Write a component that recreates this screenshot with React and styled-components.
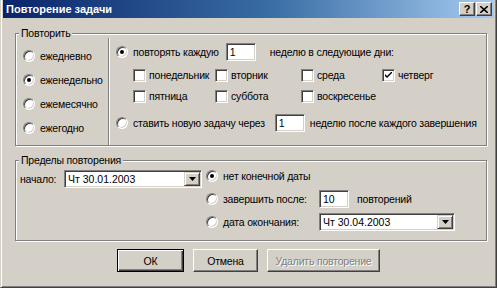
import React from 'react';
import styled, { createGlobalStyle } from 'styled-components';

const Global = createGlobalStyle`
  html, body { margin: 0; padding: 0; background: #d4d0c8; }
  body {
    font-family: "Liberation Sans", Arial, sans-serif;
    font-size: 10.5px;
    letter-spacing: -0.2px;
    color: #000;
  }
  * { box-sizing: border-box; }
`;

const Window = styled.div`
  width: 497px;
  height: 288px;
  background: #d4d0c8;
  border-style: solid;
  border-width: 0 1px 1px 1px;
  border-color: #d4d0c8 #404040 #404040 #d4d0c8;
  box-shadow: inset 1px 0 #fff, inset -1px -1px #808080;
  padding: 0 2px 2px 2px;
  display: flex;
  flex-direction: column;
`;

const TitleBar = styled.div`
  height: 18px;
  display: flex;
  align-items: center;
  padding: 0 2px 0 3px;
  background: linear-gradient(to right, #0a246a, #3a6ea5 55%, #a6caf0);
`;

const TitleText = styled.div`
  flex: 1;
  color: #fff;
  font-weight: bold;
  font-size: 11px;
  letter-spacing: 0;
`;

const CaptionButton = styled.div`
  width: 16px;
  height: 14px;
  margin-left: ${p => p.$gap || 0}px;
  background: #d4d0c8;
  border: 1px solid;
  border-color: #fff #404040 #404040 #fff;
  box-shadow: inset -1px -1px #808080;
  display: flex;
  align-items: center;
  justify-content: center;
  font-weight: bold;
  font-size: 11px;
  line-height: 1;
`;

const Content = styled.div`
  flex: 1;
  display: flex;
  flex-direction: column;
  padding: 15px 0 0 12px;
`;

const Group = styled.div`
  position: relative;
  width: 472px;
  height: ${p => p.$h}px;
  margin-top: ${p => p.$mt || 0}px;
  border: 1px solid #808080;
  box-shadow: inset 1px 1px #fff, 1px 1px #fff;
  display: flex;
`;

const GroupLabel = styled.div`
  position: absolute;
  top: -7px;
  left: 3px;
  padding: 0 2px;
  background: #d4d0c8;
  line-height: 13px;
`;

const FreqColumn = styled.div`
  width: 92px;
  padding: 14px 0 0 7px;
  display: flex;
  flex-direction: column;
  gap: 8px;
`;

const OptionRow = styled.label`
  display: flex;
  align-items: center;
  height: ${p => p.$h || 16}px;
  margin-top: ${p => p.$mt || 0}px;
  white-space: nowrap;
`;

const RadioCircle = styled.span`
  width: 12px;
  height: 12px;
  flex: none;
  border-radius: 50%;
  background: #fff;
  border: 1px solid;
  border-color: #808080 #fff #fff #808080;
  box-shadow: inset 1px 1px #404040, inset -1px -1px #d4d0c8;
  display: flex;
  align-items: center;
  justify-content: center;
  margin-right: ${p => p.$mr || 5}px;
  &::after {
    content: '';
    width: 4px;
    height: 4px;
    border-radius: 50%;
    background: ${p => (p.$on ? '#000' : 'transparent')};
  }
`;

const CheckBox = styled.span`
  width: 13px;
  height: 13px;
  flex: none;
  background: #fff;
  border: 1px solid;
  border-color: #808080 #fff #fff #808080;
  box-shadow: inset 1px 1px #404040, inset -1px -1px #d4d0c8;
  display: flex;
  align-items: center;
  justify-content: center;
  margin-right: 3px;
`;

const PatternColumn = styled.div`
  flex: 1;
  margin-top: 4px;
  border-left: 1px solid #808080;
  box-shadow: inset 1px 0 #fff;
  padding: 4px 0 0 7px;
  display: flex;
  flex-direction: column;
`;

const CheckGrid = styled.div`
  display: grid;
  grid-template-columns: 82px 86px 81px auto;
  row-gap: 5px;
  padding-left: 17px;
  margin-top: ${p => p.$mt || 0}px;
`;

const TextField = styled.div`
  width: ${p => p.$w}px;
  height: ${p => p.$h || 18}px;
  flex: none;
  background: #fff;
  border: 1px solid;
  border-color: #808080 #fff #fff #808080;
  box-shadow: inset 1px 1px #404040, inset -1px -1px #d4d0c8;
  padding: 0 3px;
  display: flex;
  align-items: center;
  letter-spacing: 0;
  margin: 0 ${p => p.$mr || 0}px 0 ${p => p.$ml || 0}px;
`;

const Combo = styled(TextField)`
  padding: 0 1px 0 3px;
  justify-content: space-between;
`;

const DropButton = styled.span`
  width: 16px;
  height: 14px;
  background: #d4d0c8;
  border: 1px solid;
  border-color: #d4d0c8 #404040 #404040 #d4d0c8;
  box-shadow: inset 1px 1px #fff, inset -1px -1px #808080;
  display: flex;
  align-items: center;
  justify-content: center;
`;

const LimitLeft = styled.div`
  display: flex;
  align-items: center;
  align-self: flex-start;
  padding: 9px 0 0 4px;
  width: 190px;
`;

const StartLabel = styled.span`
  width: 44px;
`;

const LimitRight = styled.div`
  display: grid;
  grid-template-columns: 113px auto auto;
  grid-auto-rows: 18px;
  row-gap: 5px;
  padding-top: 6px;
  align-items: center;
`;

const Wide = styled.div`
  grid-column: 1 / -1;
  display: flex;
  align-items: center;
`;

const Cell = styled.div`
  display: flex;
  align-items: center;
  white-space: nowrap;
`;

const ButtonRow = styled.div`
  display: flex;
  justify-content: center;
  gap: 9px;
  margin-top: 8px;
  padding-right: 12px;
`;

const Button = styled.div`
  width: ${p => p.$w}px;
  height: 23px;
  background: #d4d0c8;
  display: flex;
  align-items: center;
  justify-content: center;
  border: 1px solid;
  border-color: ${p => (p.$default ? '#000' : '#fff #404040 #404040 #fff')};
  box-shadow: ${p =>
    p.$default
      ? 'inset 1px 1px #fff, inset -1px -1px #404040, inset -2px -2px #808080'
      : 'inset -1px -1px #808080'};
  color: ${p => (p.$disabled ? '#808080' : '#000')};
  text-shadow: ${p => (p.$disabled ? '1px 1px #fff' : 'none')};
`;

const Check = () => (
  <svg width="7" height="7" viewBox="0 0 7 7">
    <path d="M0 2 L0 4 L2 6 L7 1 L7 -1 L2 4 Z" fill="#000" />
  </svg>
);

const Arrow = () => (
  <svg width="7" height="4" viewBox="0 0 7 4">
    <path d="M0 0 H7 L3.5 4 Z" fill="#000" />
  </svg>
);

const CloseGlyph = () => (
  <svg width="8" height="7" viewBox="0 0 8 7">
    <path d="M0 0 L8 7 M8 0 L0 7" stroke="#000" strokeWidth="1.6" />
  </svg>
);

const Radio = ({ on, children, mt, h }) => (
  <OptionRow $mt={mt} $h={h}>
    <RadioCircle $on={on} />
    {children}
  </OptionRow>
);

const Day = ({ on, children }) => (
  <OptionRow>
    <CheckBox>{on && <Check />}</CheckBox>
    {children}
  </OptionRow>
);

export default function App() {
  return (
    <>
      <Global />
      <Window>
        <TitleBar>
          <TitleText>Повторение задачи</TitleText>
          <CaptionButton>?</CaptionButton>
          <CaptionButton $gap={1}>
            <CloseGlyph />
          </CaptionButton>
        </TitleBar>
        <Content>
          <Group $h={113}>
            <GroupLabel>Повторить</GroupLabel>
            <FreqColumn>
              <Radio>ежедневно</Radio>
              <Radio on>еженедельно</Radio>
              <Radio>ежемесячно</Radio>
              <Radio>ежегодно</Radio>
            </FreqColumn>
            <PatternColumn>
              <Radio on h={20}>
                повторять каждую
                <TextField $w={30} $ml={7} $mr={14}>1</TextField>
                неделю в следующие дни:
              </Radio>
              <CheckGrid $mt={5}>
                <Day>понедельник</Day>
                <Day>вторник</Day>
                <Day>среда</Day>
                <Day on>четверг</Day>
                <Day>пятница</Day>
                <Day>суббота</Day>
                <Day>воскресенье</Day>
              </CheckGrid>
              <Radio h={20} mt={9}>
                ставить новую задачу через
                <TextField $w={30} $ml={10} $mr={5}>1</TextField>
                неделю после каждого завершения
              </Radio>
            </PatternColumn>
          </Group>
          <Group $h={81} $mt={14}>
            <GroupLabel>Пределы повторения</GroupLabel>
            <LimitLeft>
              <StartLabel>начало:</StartLabel>
              <Combo $w={138}>
                Чт 30.01.2003
                <DropButton>
                  <Arrow />
                </DropButton>
              </Combo>
            </LimitLeft>
            <LimitRight>
              <Wide>
                <RadioCircle $on />
                нет конечной даты
              </Wide>
              <Cell>
                <RadioCircle />
                завершить после:
              </Cell>
              <Cell>
                <TextField $w={30} $mr={8}>10</TextField>
                повторений
              </Cell>
              <span />
              <Cell>
                <RadioCircle />
                дата окончания:
              </Cell>
              <Cell>
                <Combo $w={136}>
                  Чт 30.04.2003
                  <DropButton>
                    <Arrow />
                  </DropButton>
                </Combo>
              </Cell>
              <span />
            </LimitRight>
          </Group>
          <ButtonRow>
            <Button $w={67} $default>ОК</Button>
            <Button $w={65}>Отмена</Button>
            <Button $w={113} $disabled>Удалить повторение</Button>
          </ButtonRow>
        </Content>
      </Window>
    </>
  );
}
